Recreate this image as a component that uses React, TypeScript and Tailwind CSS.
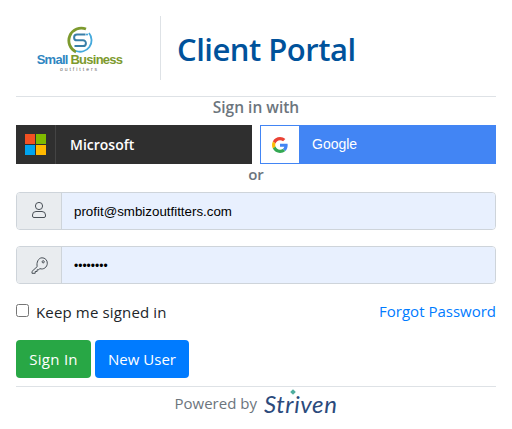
const segoe = "font-['Open_Sans','Noto_Sans',sans-serif]"

function LogoMark() {
  return (
    <svg width="28" height="28" viewBox="0 0 28 28" fill="none">
      <path d="M20 3A12.5 12.5 0 0 0 10 25.9" stroke="#7d9a2e" strokeWidth="2.8" />
      <path d="M23 7A11.5 11.5 0 0 1 10 25" stroke="#45a9dc" strokeWidth="1.8" />
      <path d="M19.5 8.5H11a2.9 2.9 0 0 0 0 5.8h6a2.9 2.9 0 0 1 0 5.8H8.5" stroke="#3a7fa8" strokeWidth="2" />
      <circle cx="21" cy="8.5" r="1.1" fill="#45a9dc" />
    </svg>
  )
}

function MicrosoftIcon() {
  return (
    <div className="grid grid-cols-2 gap-px w-[21px] h-[21px]">
      <div className="bg-[#f25022]" />
      <div className="bg-[#7fba00]" />
      <div className="bg-[#00a4ef]" />
      <div className="bg-[#ffb900]" />
    </div>
  )
}

function GoogleIcon() {
  return (
    <svg width="16" height="16" viewBox="0 0 48 48">
      <path fill="#EA4335" d="M24 9.5c3.54 0 6.71 1.22 9.21 3.6l6.85-6.85C35.9 2.38 30.47 0 24 0 14.62 0 6.51 5.38 2.56 13.22l7.98 6.19C12.43 13.72 17.74 9.5 24 9.5z" />
      <path fill="#4285F4" d="M46.98 24.55c0-1.57-.15-3.09-.38-4.55H24v9.02h12.94c-.58 2.96-2.26 5.48-4.78 7.18l7.73 6c4.51-4.18 7.09-10.36 7.09-17.65z" />
      <path fill="#FBBC05" d="M10.53 28.59c-.48-1.45-.76-2.99-.76-4.59s.27-3.14.76-4.59l-7.98-6.19C.92 16.46 0 20.12 0 24c0 3.88.92 7.54 2.56 10.78l7.97-6.19z" />
      <path fill="#34A853" d="M24 48c6.48 0 11.93-2.13 15.89-5.81l-7.73-6c-2.15 1.45-4.92 2.3-8.16 2.3-6.26 0-11.57-4.22-13.47-9.91l-7.98 6.19C6.51 42.62 14.62 48 24 48z" />
    </svg>
  )
}

function UserIcon() {
  return (
    <svg width="16" height="18" viewBox="0 0 16 18" fill="none" stroke="#495057" strokeWidth="1" className="-mt-[2px]">
      <circle cx="8" cy="5" r="3.6" />
      <path d="M5 10.5h6a3.5 3.5 0 0 1 3.5 3.5v1a1.5 1.5 0 0 1-1.5 1.5H3A1.5 1.5 0 0 1 1.5 15v-1A3.5 3.5 0 0 1 5 10.5z" />
    </svg>
  )
}

function KeyIcon() {
  return (
    <svg width="17" height="17" viewBox="0 0 17 17" fill="none" stroke="#495057" strokeWidth="1">
      <path d="M6.2 9.6L1 14.4v1.9h3.2v-1.8h1.9v-1.7h1.7l.9-1.2c3.8 1.4 7.6-1.4 7.6-5.4A5.2 5.2 0 0 0 11 .8C7.4.8 5.2 5.6 6.2 9.6z" />
      <circle cx="12.2" cy="4.8" r="1.1" />
    </svg>
  )
}

function InputRow({ icon, value, dots }: { icon: React.ReactNode; value: string; dots?: boolean }) {
  return (
    <div className="flex h-[38px] rounded border border-[#ced4da] overflow-hidden">
      <div className="w-[45px] shrink-0 bg-[#e9ecef] border-r border-[#ced4da] flex items-center justify-center">
        {icon}
      </div>
      <div className={`flex-1 bg-[#e8f0fe] pl-3 flex items-center font-['Liberation_Sans',sans-serif] text-[#000] ${dots ? "text-[12px] pt-[2px]" : "text-[13.33px] pt-[1px]"}`}>
        {value}
      </div>
    </div>
  )
}

export default function App() {
  return (
    <div className={`${segoe} w-[512px] h-[429px] bg-white px-4 pt-4 text-[#212529] overflow-hidden`}>
      <div className="flex h-16">
        <div className="w-[145px] border-r border-[#dee2e6] flex flex-col items-center pt-2.5 pr-[17px]">
          <LogoMark />
          <div className="font-['Liberation_Sans',sans-serif] font-bold text-[13px] leading-[12px] tracking-[-0.75px] whitespace-nowrap">
            <span className="text-[#2f86c1]">Small </span>
            <span className="text-[#7d9a2e]">Business</span>
          </div>
          <div className="font-['Liberation_Sans',sans-serif] text-[5px] leading-[5px] mt-[1px] tracking-[2px] text-[#666]">outfitters</div>
        </div>
        <div className="pl-[16px] pt-[2px] flex items-center text-[31px] font-semibold text-[#00529b] tracking-[-0.5px] whitespace-nowrap">
          Client Portal
        </div>
      </div>

      <div className="mt-4 border-t border-[#dee2e6] h-[29px] text-center text-[15.5px] leading-[20px] font-semibold text-[#6c757d]">
        Sign in with
      </div>

      <div className="grid grid-cols-2 gap-2 h-[39px]">
        <div className="flex bg-[#2f2f2f] items-center">
          <div className="w-[40px] h-full border-r border-[#444] flex items-center justify-center">
            <MicrosoftIcon />
          </div>
          <span className="pl-[14px] text-white font-semibold text-[14px]">Microsoft</span>
        </div>
        <div className="flex bg-[#4285f4] items-center">
          <div className="w-[40px] h-full bg-white border border-[#4285f4] flex items-center justify-center">
            <GoogleIcon />
          </div>
          <span className="pl-[12px] text-white font-['Liberation_Sans',sans-serif] text-[14px]">Google</span>
        </div>
      </div>

      <div className="h-[28px] text-center text-[15px] leading-[20px] font-semibold text-[#6c757d]">or</div>

      <div className="flex flex-col gap-4">
        <InputRow icon={<UserIcon />} value="profit@smbizoutfitters.com" />
        <InputRow icon={<KeyIcon />} value="••••••••" dots />
      </div>

      <div className="mt-[17px] flex items-center justify-between h-[22px] text-[15px]">
        <label className="flex items-center gap-[7px] tracking-[0.15px]">
          <span className="w-[13px] h-[13px] border border-[#767676] rounded-[2.5px] bg-white -mt-[3px]" />
          Keep me signed in
        </label>
        <a className="text-[#007bff] -mt-[1px]">Forgot Password</a>
      </div>

      <div className="mt-[17px] flex gap-1 h-[38px] text-[15px] text-white">
        <button className="w-[75px] rounded bg-[#28a745] tracking-[0.3px]">Sign In</button>
        <button className="w-[94px] rounded bg-[#007bff]">New User</button>
      </div>

      <div className="mt-2 border-t border-[#dee2e6] flex items-center justify-center h-[34px] gap-[7px] text-[15px] text-[#6c757d]">
        <span>Powered by</span>
        <span className="relative italic text-[24px] leading-none text-[#2b4a7c] tracking-[0.6px] font-['Lato',sans-serif]">
          Striven
          <span className="absolute left-[27px] -top-[2px] w-[4px] h-[4px] rotate-45 bg-[#4fae9e]" />
        </span>
      </div>
    </div>
  )
}
